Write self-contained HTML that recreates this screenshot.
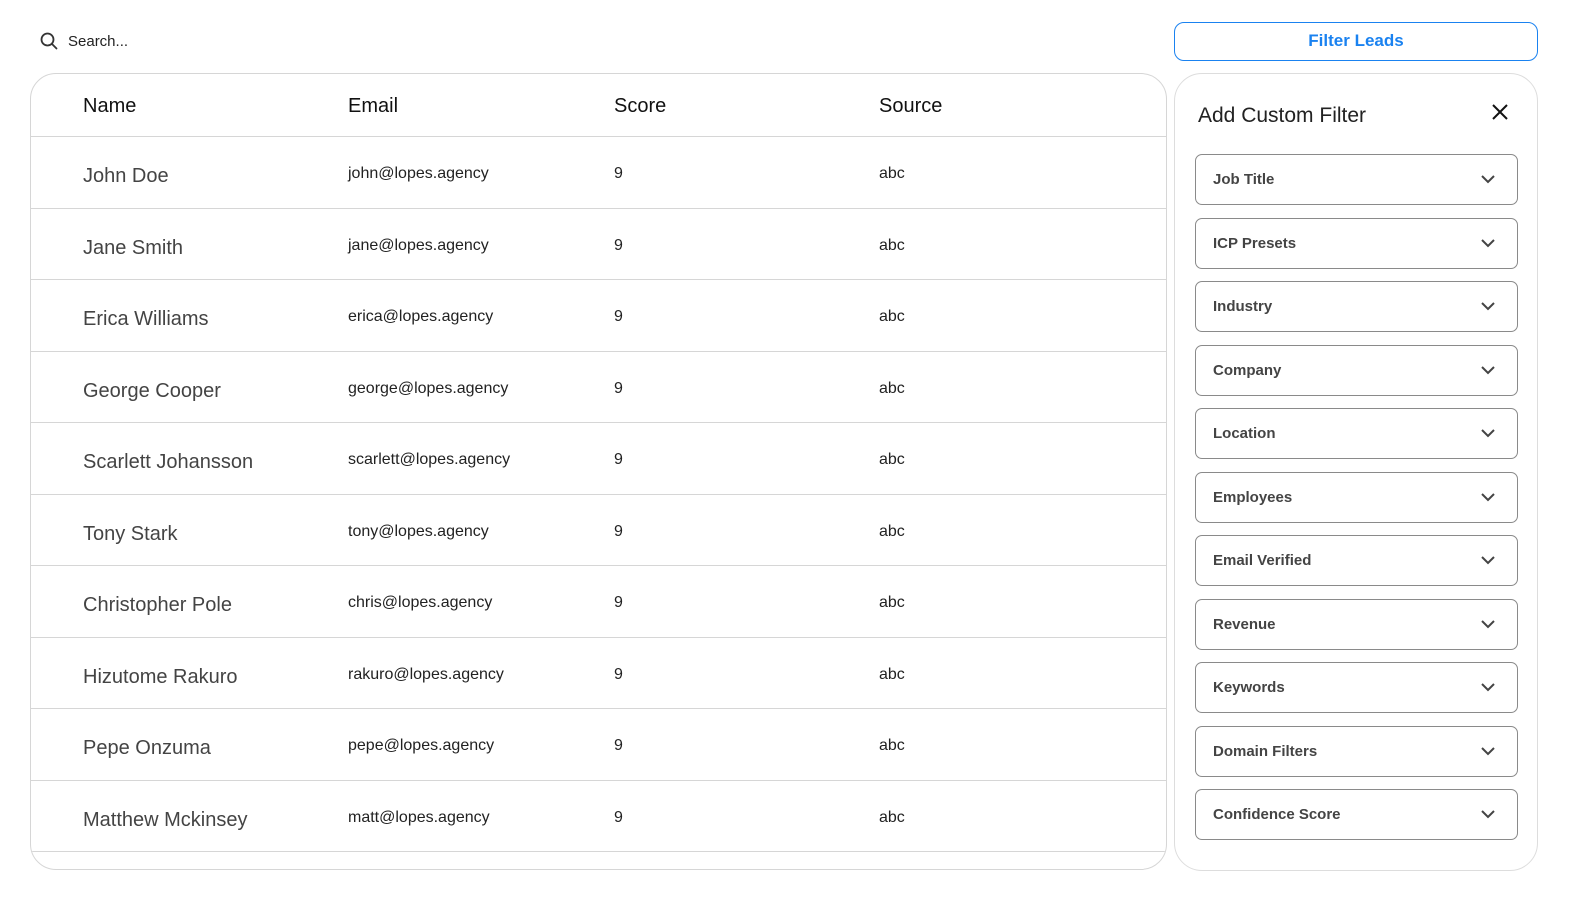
<!DOCTYPE html>
<html><head><meta charset="utf-8"><style>
*{box-sizing:border-box;margin:0;padding:0}
body{width:1580px;height:912px;background:#fff;font-family:"Liberation Sans",sans-serif;position:relative;overflow:hidden}
.search{position:absolute;left:40px;top:32px;font-size:15px;color:#222;display:flex;align-items:center;gap:10px}
.btn{position:absolute;left:1174px;top:22px;width:364px;height:39px;border:1.5px solid #1a82f0;border-radius:10px;color:#1a82f0;font-size:17px;font-weight:bold;text-align:center;line-height:36px}
.tbl{position:absolute;left:30px;top:73px;width:1137px;height:797px;border:1px solid #d6d6d6;border-radius:26px;overflow:hidden}
.hd{position:absolute;top:0;left:0;right:0;height:63px;border-bottom:1.5px solid #d6d6d6}
.hd span{position:absolute;top:21px;font-size:20px;color:#111}
.row{position:absolute;left:0;right:0;height:71.5px;border-bottom:1.5px solid #d6d6d6}
.row .n{position:absolute;left:52px;top:28px;font-size:20px;color:#444}
.row .e,.row .s,.row .c{position:absolute;top:28px;font-size:16px;color:#222}
.panel{position:absolute;left:1174px;top:73px;width:364px;height:798px;border:1px solid #ddd;border-radius:28px}
.title{position:absolute;left:23px;top:30px;font-size:21px;color:#222;font-weight:500}
.x{position:absolute;left:316px;top:29px}
.dd{position:absolute;left:20px;width:323px;height:51px;border:1px solid #8a8a8a;border-radius:7px;font-size:15px;font-weight:bold;color:#444;padding-left:17px;line-height:49px}
.dd svg{position:absolute;right:21px;top:19px}
</style></head><body>
<div class="search"><svg width="18" height="18" viewBox="0 0 18 18"><circle cx="7.5" cy="7.5" r="6" fill="none" stroke="#333" stroke-width="1.8"/><path d="M12 12l4.5 4.5" stroke="#333" stroke-width="1.8" stroke-linecap="round"/></svg>Search...</div>
<div class="btn">Filter Leads</div>
<div class="tbl">
<div class="hd"><span style="left:52px">Name</span><span style="left:317px">Email</span><span style="left:583px">Score</span><span style="left:848px">Source</span></div>
<div class="row" style="top:63px"><span class="n">John Doe</span><span class="e" style="left:317px">john@lopes.agency</span><span class="s" style="left:583px">9</span><span class="c" style="left:848px">abc</span></div>
<div class="row" style="top:134.5px"><span class="n">Jane Smith</span><span class="e" style="left:317px">jane@lopes.agency</span><span class="s" style="left:583px">9</span><span class="c" style="left:848px">abc</span></div>
<div class="row" style="top:206px"><span class="n">Erica Williams</span><span class="e" style="left:317px">erica@lopes.agency</span><span class="s" style="left:583px">9</span><span class="c" style="left:848px">abc</span></div>
<div class="row" style="top:277.5px"><span class="n">George Cooper</span><span class="e" style="left:317px">george@lopes.agency</span><span class="s" style="left:583px">9</span><span class="c" style="left:848px">abc</span></div>
<div class="row" style="top:349px"><span class="n">Scarlett Johansson</span><span class="e" style="left:317px">scarlett@lopes.agency</span><span class="s" style="left:583px">9</span><span class="c" style="left:848px">abc</span></div>
<div class="row" style="top:420.5px"><span class="n">Tony Stark</span><span class="e" style="left:317px">tony@lopes.agency</span><span class="s" style="left:583px">9</span><span class="c" style="left:848px">abc</span></div>
<div class="row" style="top:492px"><span class="n">Christopher Pole</span><span class="e" style="left:317px">chris@lopes.agency</span><span class="s" style="left:583px">9</span><span class="c" style="left:848px">abc</span></div>
<div class="row" style="top:563.5px"><span class="n">Hizutome Rakuro</span><span class="e" style="left:317px">rakuro@lopes.agency</span><span class="s" style="left:583px">9</span><span class="c" style="left:848px">abc</span></div>
<div class="row" style="top:635px"><span class="n">Pepe Onzuma</span><span class="e" style="left:317px">pepe@lopes.agency</span><span class="s" style="left:583px">9</span><span class="c" style="left:848px">abc</span></div>
<div class="row" style="top:706.5px"><span class="n">Matthew Mckinsey</span><span class="e" style="left:317px">matt@lopes.agency</span><span class="s" style="left:583px">9</span><span class="c" style="left:848px">abc</span></div>
</div>
<div class="panel">
<div class="title">Add Custom Filter</div>
<svg class="x" width="18" height="18" viewBox="0 0 18 18"><path d="M2 2l14 14M16 2L2 16" stroke="#111" stroke-width="2"/></svg>
<div class="dd" style="top:80px">Job Title<svg width="16" height="10" viewBox="0 0 16 10"><path d="M2 2l6 6 6-6" fill="none" stroke="#444" stroke-width="2"/></svg></div>
<div class="dd" style="top:144px">ICP Presets<svg width="16" height="10" viewBox="0 0 16 10"><path d="M2 2l6 6 6-6" fill="none" stroke="#444" stroke-width="2"/></svg></div>
<div class="dd" style="top:207px">Industry<svg width="16" height="10" viewBox="0 0 16 10"><path d="M2 2l6 6 6-6" fill="none" stroke="#444" stroke-width="2"/></svg></div>
<div class="dd" style="top:271px">Company<svg width="16" height="10" viewBox="0 0 16 10"><path d="M2 2l6 6 6-6" fill="none" stroke="#444" stroke-width="2"/></svg></div>
<div class="dd" style="top:334px">Location<svg width="16" height="10" viewBox="0 0 16 10"><path d="M2 2l6 6 6-6" fill="none" stroke="#444" stroke-width="2"/></svg></div>
<div class="dd" style="top:398px">Employees<svg width="16" height="10" viewBox="0 0 16 10"><path d="M2 2l6 6 6-6" fill="none" stroke="#444" stroke-width="2"/></svg></div>
<div class="dd" style="top:461px">Email Verified<svg width="16" height="10" viewBox="0 0 16 10"><path d="M2 2l6 6 6-6" fill="none" stroke="#444" stroke-width="2"/></svg></div>
<div class="dd" style="top:525px">Revenue<svg width="16" height="10" viewBox="0 0 16 10"><path d="M2 2l6 6 6-6" fill="none" stroke="#444" stroke-width="2"/></svg></div>
<div class="dd" style="top:588px">Keywords<svg width="16" height="10" viewBox="0 0 16 10"><path d="M2 2l6 6 6-6" fill="none" stroke="#444" stroke-width="2"/></svg></div>
<div class="dd" style="top:652px">Domain Filters<svg width="16" height="10" viewBox="0 0 16 10"><path d="M2 2l6 6 6-6" fill="none" stroke="#444" stroke-width="2"/></svg></div>
<div class="dd" style="top:715px">Confidence Score<svg width="16" height="10" viewBox="0 0 16 10"><path d="M2 2l6 6 6-6" fill="none" stroke="#444" stroke-width="2"/></svg></div>
</div>
</body></html>
